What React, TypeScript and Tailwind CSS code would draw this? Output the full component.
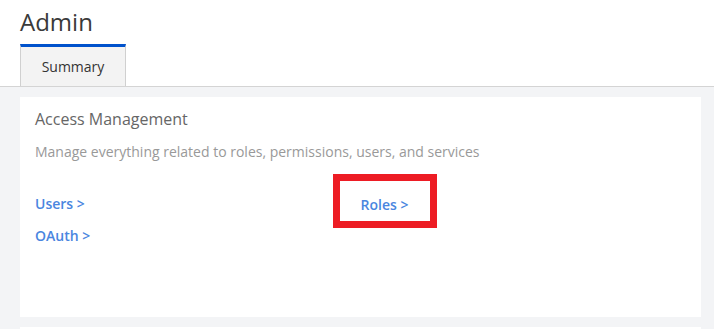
import React from 'react';

const font = { fontFamily: '"Open Sans", "Liberation Sans", sans-serif' };

function Card({ children }: { children?: React.ReactNode }) {
  return <div className="bg-white h-[220px] px-[15px] pt-[10px]">{children}</div>;
}

export default function App() {
  return (
    <div className="w-[714px] h-[329px] overflow-hidden bg-white" style={font}>
      <div className="pl-5">
        <h1 className="text-[24px] leading-[44px] text-[#3a3a3a] h-[44px]">Admin</h1>
      </div>
      <div className="flex pl-5 border-b border-[#d4d4d4]">
        <div className="w-[106px] h-[42px] bg-[#f3f3f3] border-t-[3px] border-t-[#0052cc] border-x border-x-[#d0d0d0] flex items-center justify-center text-[14px] text-[#333]">
          Summary
        </div>
      </div>
      <div className="bg-[#f3f4f6] pl-5 pr-[13px] pt-[10px] flex flex-col gap-[10px]">
        <Card>
          <h2 className="text-[16px] leading-[24px] text-[#666]">Access Management</h2>
          <p className="mt-[11px] text-[14px] leading-[20px] text-[#999]">
            Manage everything related to roles, permissions, users, and services
          </p>
          <div className="grid grid-cols-2 mt-[32px]">
            <div className="flex flex-col gap-[12px]">
              <a className="text-[14px] leading-[20px] font-semibold text-[#4a86e0]">Users &gt;</a>
              <a className="text-[14px] leading-[20px] font-semibold text-[#4a86e0]">OAuth &gt;</a>
            </div>
            <div>
              <div className="w-[104px] h-[54px] -ml-[28px] -mt-[20px] border-[7px] border-[#ed1c24] pl-[21px] pt-[14px]">
                <a className="block text-[14px] leading-[20px] font-semibold text-[#4a86e0]">Roles &gt;</a>
              </div>
            </div>
          </div>
        </Card>
        <Card />
      </div>
    </div>
  );
}
